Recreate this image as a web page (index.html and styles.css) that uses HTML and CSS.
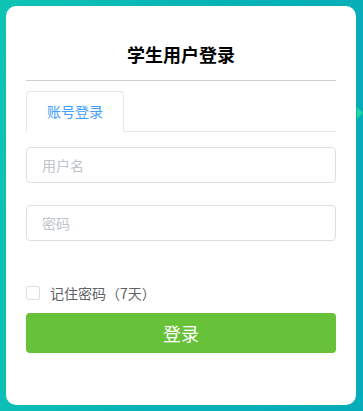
FILE: index.html
```html
<!DOCTYPE html>
<html lang="zh">
<head>
<meta charset="utf-8">
<link rel="stylesheet" href="styles.css">
</head>
<body>
<div class="page">
  <div class="card">
    <h1 class="title">学生用户登录</h1>
    <div class="tabs">
      <div class="tab active">账号登录</div>
    </div>
    <div class="form">
      <div class="field"><input class="input" type="text" placeholder="用户名"></div>
      <div class="field"><input class="input" type="password" placeholder="密码"></div>
      <label class="remember"><span class="checkbox"></span><span class="remember-text">记住密码（7天）</span></label>
      <button class="submit" type="button">登录</button>
    </div>
  </div>
  <span class="arrow"></span>
</div>
</body>
</html>
```
FILE: styles.css
```css
html, body {
  margin: 0;
  padding: 0;
}
body {
  width: 363px;
  height: 411px;
  overflow: hidden;
  font-family: "Noto Sans CJK SC", "Noto Sans", sans-serif;
  background: linear-gradient(100deg, #0ec4b3 0%, #08b3b7 50%, #06acb9 100%);
}
.page {
  position: relative;
  padding: 6px;
  height: 411px;
  box-sizing: border-box;
}
.card {
  width: 350px;
  height: 399px;
  box-sizing: border-box;
  background: #fff;
  border-radius: 10px;
  padding: 36px 20px 0;
}
.title {
  margin: 0;
  font-size: 18px;
  font-weight: bold;
  line-height: 24px;
  height: 24px;
  text-align: center;
  color: #000;
  padding-bottom: 14px;
  border-bottom: 1px solid #d0d0d0;
}
.tabs {
  display: flex;
  margin-top: 10px;
  border-bottom: 1px solid #e4e7ed;
}
.tab {
  height: 39px;
  line-height: 39px;
  padding: 0 20px;
  font-size: 14px;
  color: #409eff;
  background: #fff;
  border: 1px solid #e4e7ed;
  border-bottom: 1px solid #fff;
  border-radius: 4px 4px 0 0;
  margin-bottom: -1px;
}
.form {
  display: flex;
  flex-direction: column;
  padding-top: 15px;
}
.field {
  height: 36px;
  margin-bottom: 22px;
}
.input {
  width: 100%;
  height: 36px;
  box-sizing: border-box;
  border: 1px solid #dcdfe6;
  border-radius: 4px;
  padding: 0 15px;
  font-family: inherit;
  font-size: 14px;
  color: #606266;
  outline: none;
}
.input::placeholder {
  color: #c0c4cc;
}
.remember {
  display: flex;
  align-items: center;
  margin-top: 22px;
  height: 16px;
}
.checkbox {
  width: 14px;
  height: 14px;
  box-sizing: border-box;
  border: 1px solid #dcdfe6;
  border-radius: 2px;
  background: #fff;
}
.remember-text {
  margin-left: 10px;
  font-size: 14px;
  color: #606266;
  line-height: 16px;
}
.submit {
  margin-top: 12px;
  height: 40px;
  border: none;
  border-radius: 4px;
  background: #67c23a;
  color: #fff;
  font-family: inherit;
  font-size: 18px;
  padding: 0;
}
.arrow {
  position: absolute;
  right: 0;
  top: 107px;
  width: 0;
  height: 0;
  border-top: 6px solid transparent;
  border-bottom: 6px solid transparent;
  border-left: 6px solid #1fd8a0;
}
```
